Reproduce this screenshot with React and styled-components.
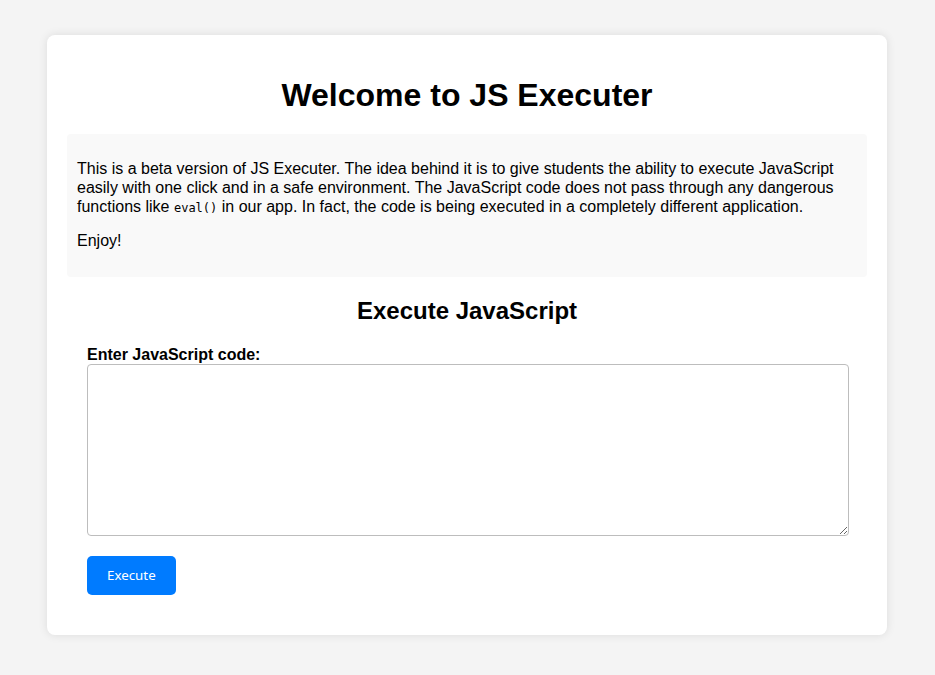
import React from "react";
import styled, { createGlobalStyle } from "styled-components";

const Global = createGlobalStyle`
  html, body { margin: 0; padding: 0; }
  body {
    background: #f4f4f4;
    font-family: "Liberation Sans", Arial, sans-serif;
    color: #000;
  }
`;

const Page = styled.div`
  padding: 35px 20px 38px 19px;
`;

const Card = styled.div`
  max-width: 800px;
  margin: 0 auto;
  padding: 20px;
  background: #fff;
  border-radius: 8px;
  box-shadow: 0 0 10px rgba(0, 0, 0, 0.1);
`;

const Title = styled.h1`
  font-size: 32px;
  line-height: 37px;
  font-weight: bold;
  text-align: center;
  margin: 22px 0 20px;
`;

const Info = styled.div`
  background: #f9f9f9;
  padding: 10px;
  border-radius: 4px;
`;

const Para = styled.p`
  font-size: 16px;
  line-height: 18.75px;
  margin: 16px 0;
`;

const Code = styled.code`
  font-family: "DejaVu Sans Mono", "Liberation Mono", monospace;
  font-size: 12px;
  line-height: 1;
`;

const SubTitle = styled.h2`
  font-size: 24px;
  line-height: 28px;
  font-weight: bold;
  text-align: center;
  margin: 19.92px 0;
`;

const Form = styled.form`
  padding: 0 20px 20px;
`;

const Label = styled.label`
  display: block;
  margin-top: 3px;
  font-weight: bold;
  font-size: 16px;
  line-height: 19px;
`;

const Area = styled.textarea`
  display: block;
  box-sizing: border-box;
  width: 762px;
  height: 172px;
  margin: 0;
  border: 1px solid #bdbdbd;
  border-radius: 4px;
  padding: 8px;
  font-family: "DejaVu Sans Mono", monospace;
  font-size: 13px;
  resize: both;
  outline: none;
`;

const Button = styled.button`
  display: block;
  margin-top: 20px;
  background: #007bff;
  color: #fff;
  border: none;
  border-radius: 5px;
  padding: 0 20px;
  height: 39px;
  font-family: "Noto Sans", "Open Sans", sans-serif;
  font-size: 13.33px;
  cursor: pointer;
`;

export default function App() {
  return (
    <>
      <Global />
      <Page>
        <Card>
          <Title>Welcome to JS Executer</Title>
          <Info>
            <Para>
              This is a beta version of JS Executer. The idea behind it is to give students the ability to execute
              JavaScript easily with one click and in a safe environment. The JavaScript code does not pass through
              any dangerous functions like <Code>eval()</Code> in our app. In fact, the code is being executed in a
              completely different application.
            </Para>
            <Para>Enjoy!</Para>
          </Info>
          <SubTitle>Execute JavaScript</SubTitle>
          <Form onSubmit={(e) => e.preventDefault()}>
            <Label htmlFor="code">Enter JavaScript code:</Label>
            <Area id="code" />
            <Button type="submit">Execute</Button>
          </Form>
        </Card>
      </Page>
    </>
  );
}
